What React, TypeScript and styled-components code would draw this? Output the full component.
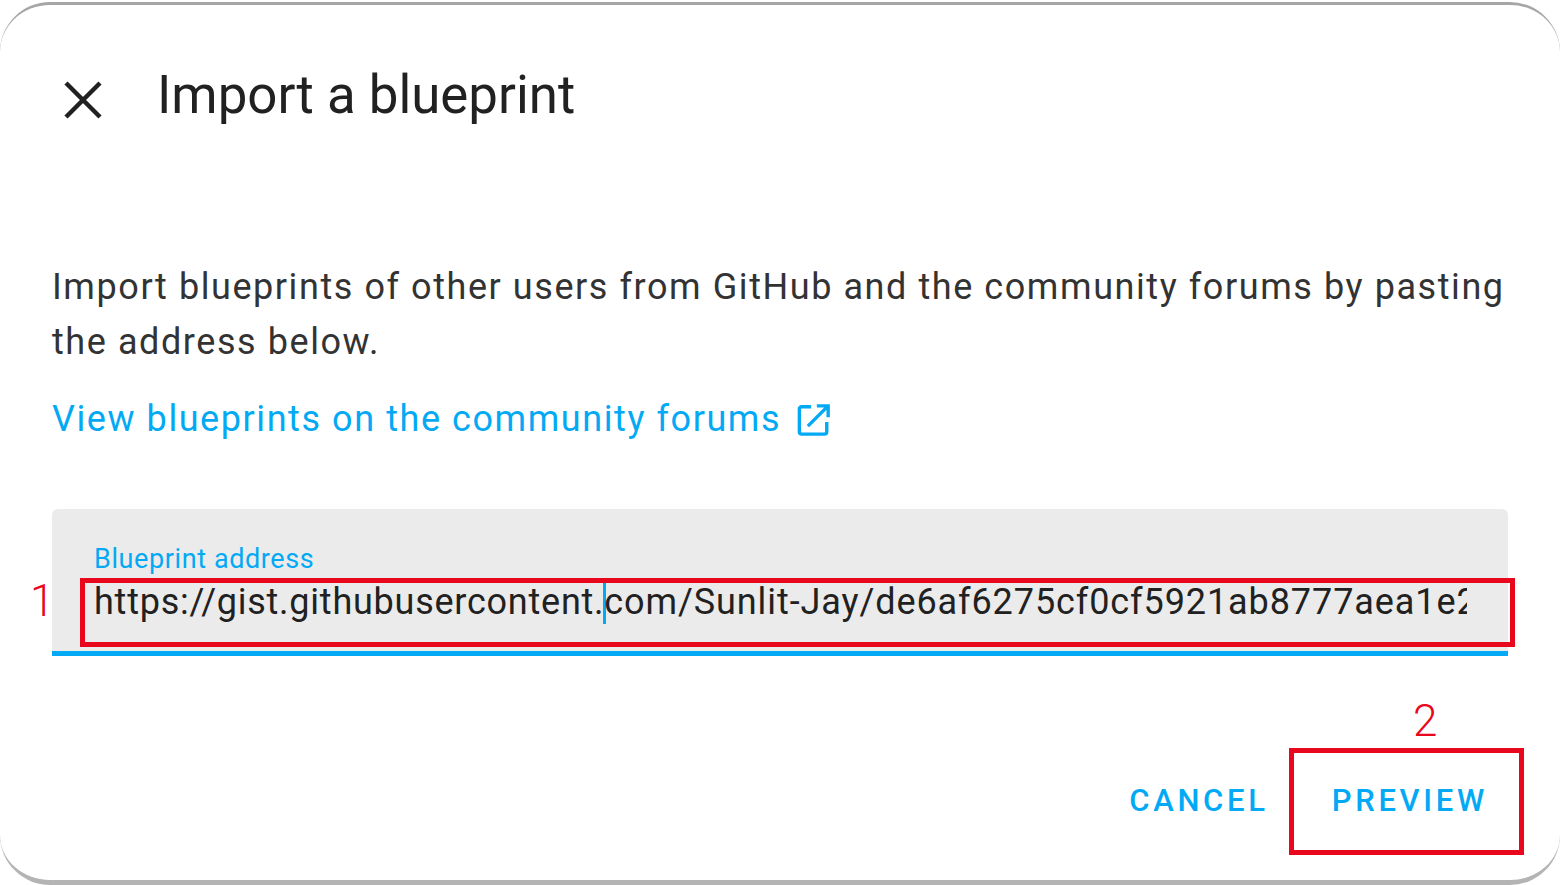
import React from 'react'
import styled, { createGlobalStyle } from 'styled-components'

const GlobalStyle = createGlobalStyle`
  html, body {
    margin: 0;
    padding: 0;
    background: #fff;
  }

  body {
    font-family: Roboto, "Liberation Sans", sans-serif;
  }
`

const Dialog = styled.div`
  position: relative;
  box-sizing: border-box;
  width: 1560px;
  height: 885px;
  padding: 2px 0 0;
  overflow: hidden;
  background: #fff;
`

const Card = styled.div`
  box-sizing: border-box;
  height: 883px;
  padding: 0 52px;
  display: flex;
  flex-direction: column;
  background: #fff;
  border-radius: 50px;
  border-top: 3px solid #a6a6a6;
  border-bottom: 5px solid #b4b4b4;
`

const Header = styled.div`
  display: flex;
  align-items: flex-start;
  height: 255px;
  padding: 55px 0 0 11px;
  box-sizing: border-box;
`

const CloseIcon = styled.svg`
  width: 40px;
  height: 40px;
  margin-top: 20px;
  color: #212121;
`

const Title = styled.h1`
  margin: 0 0 0 54px;
  font-size: 52.8px;
  line-height: 70px;
  font-weight: 400;
  color: #212121;
`

const Description = styled.p`
  margin: 0;
  width: 1470px;
  font-size: 36px;
  line-height: 55px;
  letter-spacing: 1.57px;
  color: #333;
  white-space: pre-line;
`

const ForumLink = styled.a`
  display: flex;
  align-items: center;
  gap: 16px;
  margin-top: 24px;
  font-size: 36px;
  line-height: 50px;
  letter-spacing: 1.57px;
  color: #03a9f4;
  text-decoration: none;
`

const ExternalIcon = styled.svg`
  width: 34px;
  height: 34px;
  margin-top: 2px;
`

const Field = styled.div`
  box-sizing: border-box;
  width: 1456px;
  height: 147px;
  margin-top: 65px;
  padding: 34px 42px 0;
  background: #ebebeb;
  border-bottom: 5px solid #03a9f4;
  border-radius: 6px 6px 0 0;
`

const FieldLabel = styled.div`
  font-size: 27px;
  line-height: 32px;
  letter-spacing: 0.6px;
  color: #03a9f4;
`

const FieldValue = styled.div`
  width: 1373px;
  margin-top: 2px;
  overflow: hidden;
  white-space: nowrap;
  font-size: 36px;
  line-height: 50px;
  letter-spacing: 0.76px;
  color: #212121;
`

const ValueTail = styled.span`
  letter-spacing: 0.91px;
`

const Caret = styled.span`
  display: inline-block;
  width: 3px;
  height: 41px;
  margin: 0 -1.5px;
  vertical-align: -10px;
  background: #03a9f4;
`

const Actions = styled.div`
  display: flex;
  justify-content: flex-end;
  gap: 63px;
  margin: 120px 20px 0 0;
`

const ActionButton = styled.button`
  padding: 0;
  border: 0;
  background: none;
  font-family: inherit;
  font-size: 31px;
  line-height: 50px;
  font-weight: 500;
  letter-spacing: 3.7px;
  color: #03a9f4;
`

const Highlight = styled.div<{ $left: number; $top: number; $width: number; $height: number }>`
  position: absolute;
  box-sizing: border-box;
  left: ${(p) => p.$left}px;
  top: ${(p) => p.$top}px;
  width: ${(p) => p.$width}px;
  height: ${(p) => p.$height}px;
  border: 5px solid #e8071d;
`

const StepNumber = styled.span<{ $left: number; $top: number }>`
  position: absolute;
  left: ${(p) => p.$left}px;
  top: ${(p) => p.$top}px;
  font-size: 44px;
  line-height: 50px;
  font-weight: 300;
  color: #e8071d;
`

const App: React.FC = () => (
  <>
    <GlobalStyle />
    <Dialog>
      <Card>
        <Header>
          <CloseIcon viewBox="0 0 40 40" fill="none" stroke="currentColor" strokeWidth="4.5">
            <path d="M3 3 L37 37 M37 3 L3 37" />
          </CloseIcon>
          <Title>Import a blueprint</Title>
        </Header>
        <Description>
          {'Import blueprints of other users from GitHub and the community forums by pasting\nthe address below.'}
        </Description>
        <ForumLink href="#">
          View blueprints on the community forums
          <ExternalIcon viewBox="0 0 36 36" fill="none" stroke="currentColor" strokeWidth="3.6">
            <path d="M15 4 H5 Q2.500 4 2.500 6.500 V30.500 Q2.500 33 5 33 H29 Q31.500 33 31.500 30.500 V20" />
            <path d="M21 3 H33 V15 M33 3 L11.500 24.500" />
          </ExternalIcon>
        </ForumLink>
        <Field>
          <FieldLabel>Blueprint address</FieldLabel>
          <FieldValue>
            https://gist.githubusercontent.
            <Caret />
            <ValueTail>com/Sunlit-Jay/de6af6275cf0cf5921ab8777aea1e2f9b0c1</ValueTail>
          </FieldValue>
        </Field>
        <Actions>
          <ActionButton>CANCEL</ActionButton>
          <ActionButton>PREVIEW</ActionButton>
        </Actions>
      </Card>
      <StepNumber $left={30} $top={576}>1</StepNumber>
      <Highlight $left={80} $top={578} $width={1435} $height={69} />
      <StepNumber $left={1413} $top={696}>2</StepNumber>
      <Highlight $left={1289} $top={748} $width={235} $height={107} />
    </Dialog>
  </>
)

export default App
